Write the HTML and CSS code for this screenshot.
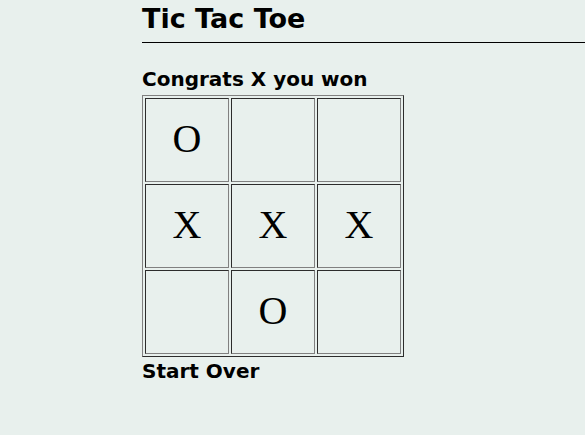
FILE: index.html
```html
<!DOCTYPE html>
<html lang="en">
<head>
<meta charset="utf-8">
<title>Tic Tac Toe</title>
<link rel="stylesheet" href="styles.css">
</head>
<body>
<div class="app">
  <h1 class="title">Tic Tac Toe</h1>
  <div class="status">Congrats X you won</div>
  <table class="board">
    <tr><td class="cell">O</td><td class="cell"></td><td class="cell"></td></tr>
    <tr><td class="cell">X</td><td class="cell">X</td><td class="cell">X</td></tr>
    <tr><td class="cell"></td><td class="cell">O</td><td class="cell"></td></tr>
  </table>
  <div class="restart">Start Over</div>
</div>
</body>
</html>
```

FILE: styles.css
```css
html, body {
  margin: 0;
  padding: 0;
  background: #e8f0ed;
  color: #000;
  font-family: "DejaVu Sans", Verdana, sans-serif;
}

.app {
  padding-left: 142px;
}

.title {
  margin: 4px 0 0 0;
  padding-bottom: 8px;
  border-bottom: 1px solid #000;
  font-size: 27px;
  line-height: 30px;
  font-weight: bold;
}

.status {
  margin-top: 24px;
  font-size: 20px;
  line-height: 24px;
  font-weight: bold;
}

.board {
  margin-top: 4px;
  border-collapse: separate;
  border-spacing: 2px;
  border: 1px outset gray;
}

.cell {
  box-sizing: border-box;
  width: 84px;
  height: 84px;
  padding: 0 0 3px 0;
  border: 1px inset gray;
  text-align: center;
  vertical-align: middle;
  font-family: "Liberation Serif", "Times New Roman", serif;
  font-size: 40px;
}

.restart {
  margin-top: 2px;
  font-size: 20px;
  line-height: 24px;
  font-weight: bold;
}
```
